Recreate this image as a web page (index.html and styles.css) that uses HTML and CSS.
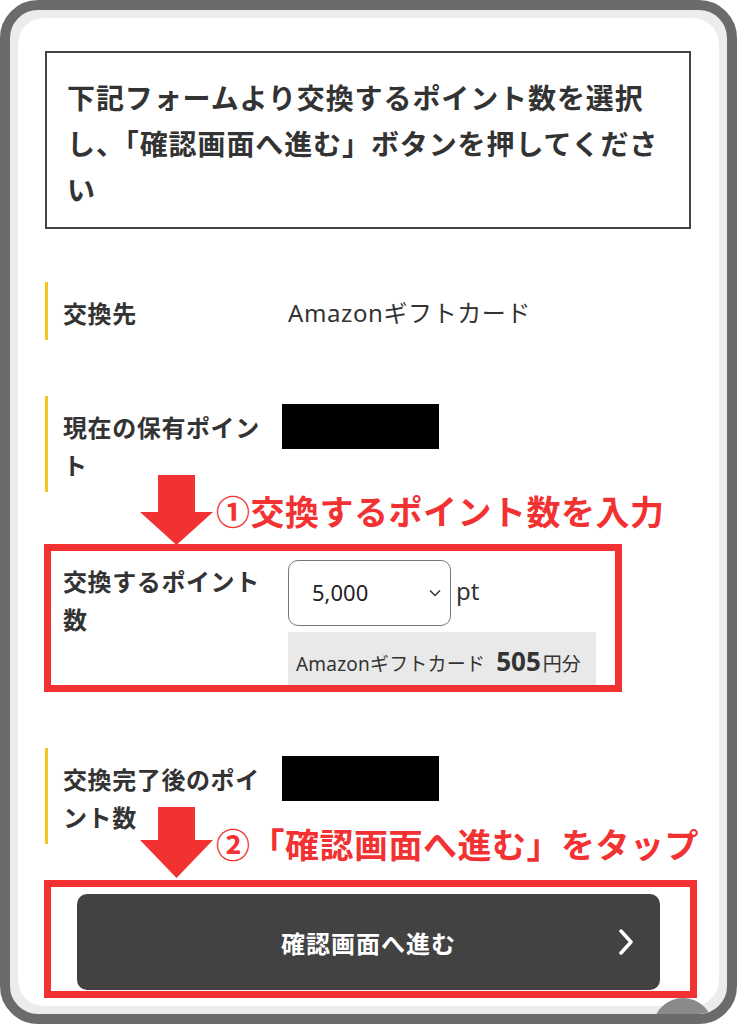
FILE: index.html
```html
<!DOCTYPE html>
<html lang="ja">
<head>
<meta charset="utf-8">
<title>ポイント交換</title>
<link rel="stylesheet" href="styles.css">
</head>
<body>
<div class="frame">
  <div class="screen">
    <div class="notice">下記フォームより交換するポイント数を選択し、「確認画面へ進む」ボタンを押してください</div>

    <div class="rows">
      <div class="row r1">
        <div class="label">交換先</div>
        <div class="value text">Amazonギフトカード</div>
      </div>
      <div class="row r2">
        <div class="label">現在の保有ポイント</div>
        <div class="value"><div class="redact"></div></div>
      </div>
      <div class="row r3">
        <div class="label">交換するポイント数</div>
        <div class="value">
          <div class="select-line">
            <div class="select">
              <span class="sel-val">5,000</span>
              <svg class="sel-chev" width="12" height="8" viewBox="0 0 12 8"><path d="M1 1.5 L6 6.5 L11 1.5" fill="none" stroke="#333" stroke-width="1.5"/></svg>
            </div>
            <span class="unit">pt</span>
          </div>
          <div class="conv"><span class="conv-name">Amazonギフトカード</span><b class="conv-num">505</b><span class="conv-yen">円分</span></div>
        </div>
      </div>
      <div class="row r4">
        <div class="label">交換完了後のポイント数</div>
        <div class="value"><div class="redact"></div></div>
      </div>
    </div>

    <button class="btn">確認画面へ進む
      <svg class="btn-chev" width="16" height="26" viewBox="0 0 16 26"><path d="M3 2 L13 13 L3 24" fill="none" stroke="#fff" stroke-width="3.5" stroke-linecap="round" stroke-linejoin="round"/></svg>
    </button>

    <div class="anno box1"></div>
    <div class="anno box2"></div>
    <svg class="anno arrow1" width="73" height="70" viewBox="0 0 73 70"><rect x="18" y="0" width="37" height="38" fill="#f23232"/><polygon points="0,37 73,37 36.5,70" fill="#f23232"/></svg>
    <svg class="anno arrow2" width="73" height="71" viewBox="0 0 73 71"><rect x="18" y="0" width="37" height="34" fill="#f23232"/><polygon points="0,33 73,33 36.5,71" fill="#f23232"/></svg>
    <div class="anno note1">①交換するポイント数を入力</div>
    <div class="anno note2">②「確認画面へ進む」をタップ</div>
  </div>
  <div class="totop"></div>
</div>
</body>
</html>
```

FILE: styles.css
```css
* { box-sizing: border-box; }
html, body { margin: 0; padding: 0; background: #fff; }
body {
  font-family: "Noto Sans", "Noto Sans CJK JP", sans-serif;
  color: #333;
  text-spacing-trim: space-all;
}
.frame {
  position: relative;
  width: 737px;
  height: 1024px;
  border: 10px solid #6b6b6b;
  border-radius: 38px;
  background: #ececec;
  padding: 8px;
  overflow: hidden;
}
.screen {
  position: relative;
  height: 100%;
  background: #fff;
  border-radius: 26px;
  padding: 33px 28px 0 27px;
  overflow: hidden;
}
.notice {
  border: 2px solid #444;
  padding: 21px 20px 15px 20px;
  font-family: "Noto Sans CJK JP", sans-serif;
  font-weight: 700;
  font-size: 28px;
  line-height: 46px;
  letter-spacing: 0.9px;
  color: #333;
  text-spacing-trim: normal;
}
.rows { margin-top: 53px; }
.row {
  display: flex;
  border-left: 3px solid #f2c51c;
  padding: 12px 0 8px 15px;
  margin-top: 56px;
}
.row.r1 { margin-top: 0; }
.row.r3 { margin-top: 58px; padding-bottom: 0; }
.row.r4 { margin-top: 56px; }
.label {
  flex: 0 0 205px;
  margin-right: 20px;
  font-family: "Noto Sans CJK JP", sans-serif;
  font-weight: 700;
  font-size: 24px;
  line-height: 38px;
  letter-spacing: 0.6px;
  color: #333;
}
.value { flex: 1; }
.value.text {
  font-size: 24px;
  line-height: 38px;
  letter-spacing: 0.6px;
  color: #333;
}
.redact {
  width: 157px;
  height: 45px;
  margin: -4px 0 0 -6px;
  background: #000;
}
.select-line {
  display: flex;
  align-items: center;
  margin-top: -2px;
}
.select {
  position: relative;
  width: 163px;
  height: 66px;
  border: 1.5px solid #777;
  border-radius: 10px;
  display: flex;
  align-items: center;
  padding-left: 23px;
  padding-bottom: 3px;
  font-size: 22px;
  color: #222;
}
.sel-chev { position: absolute; right: 9px; top: 28px; }
.unit {
  margin-left: 5px;
  margin-top: -6px;
  font-size: 24px;
  color: #333;
}
.conv {
  margin-top: 6px;
  width: 308px;
  height: 60px;
  background: #e9e9e9;
  padding: 11px 8px 0 8px;
  display: flex;
  align-items: baseline;
  white-space: nowrap;
  color: #333;
}
.conv-name { font-size: 19px; letter-spacing: 0.2px; }
.conv-num { font-size: 26px; font-weight: 700; margin-left: 11px; }
.conv-yen { font-size: 19px; margin-left: 2px; }
.btn {
  position: relative;
  display: block;
  width: 583px;
  height: 96px;
  margin: 50px 0 0 32px;
  border: none;
  border-radius: 10px;
  background: #424242;
  color: #fff;
  font-family: "Noto Sans CJK JP", sans-serif;
  font-weight: 700;
  font-size: 24px;
  letter-spacing: 1px;
  text-align: center;
  padding: 0;
}
.btn-chev { position: absolute; right: 26px; top: 35px; }

.anno { position: absolute; }
.box1 {
  left: 26px; top: 526px; width: 578px; height: 148px;
  border: 7px solid #f23232;
}
.box2 {
  left: 26px; top: 862px; width: 653px; height: 118px;
  border: 7px solid #f23232;
}
.arrow1 { left: 122px; top: 457px; }
.arrow2 { left: 122px; top: 789px; }
.note1, .note2 {
  left: 198px;
  font-family: "Noto Sans CJK JP", sans-serif;
  font-weight: 700;
  font-size: 34px;
  line-height: 40px;
  letter-spacing: 0.5px;
  color: #f23232;
  white-space: nowrap;
}
.note1 { top: 473px; }
.note2 { top: 806px; }
.totop {
  position: absolute;
  left: 643px;
  top: 988px;
  width: 60px;
  height: 60px;
  border-radius: 50%;
  background: #8a8a8a;
}
```
